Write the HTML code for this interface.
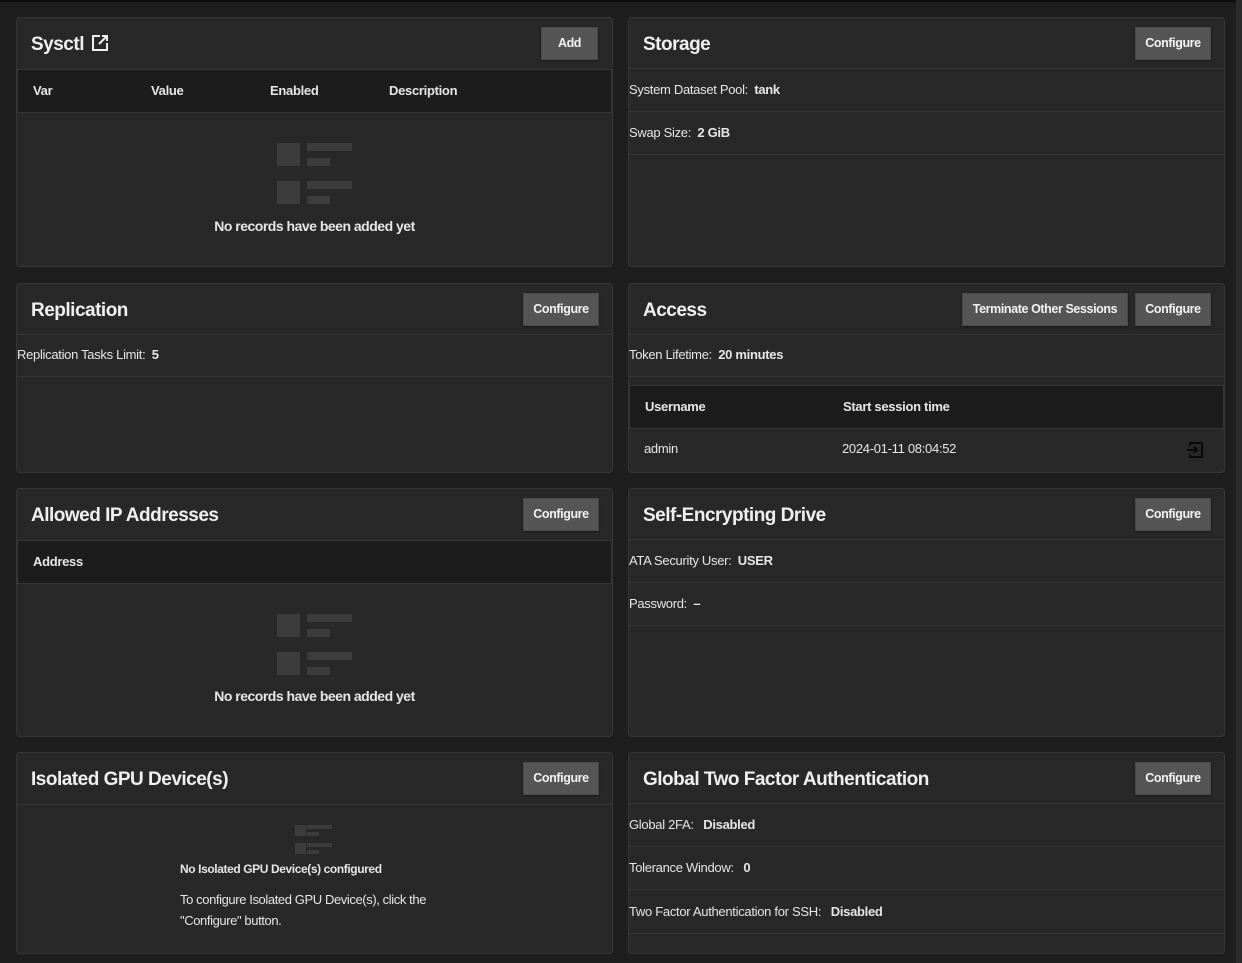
<!DOCTYPE html>
<html><head><meta charset="utf-8"><style>
*{box-sizing:border-box;margin:0;padding:0}
body{width:1242px;height:963px;background:#1e1e1e;font-family:"Liberation Sans",sans-serif;color:#e6e6e6;position:relative;overflow:hidden;font-size:13px;letter-spacing:-0.3px}
.top{position:absolute;left:0;top:0;width:1242px;height:2px;background:#0e0e0e}
.sb{position:absolute;left:1236px;top:0;width:6px;height:963px;background:#2a2a2a}
.card{position:absolute;background:#282828;border:1px solid #363636;border-radius:4px;overflow:hidden}
.L{left:16px;width:597px}.R{left:628px;width:597px}
.hd{position:absolute;left:0;right:0;top:0;height:51px;border-bottom:1px solid #363636}
.ttl{position:absolute;left:14px;top:16px;font-size:19px;font-weight:bold;color:#f0f0f0;letter-spacing:-0.5px}
.btn{position:absolute;top:9px;height:33px;background:#555;border:1px solid #4a4a4a;color:#f2f2f2;font-weight:bold;font-size:12.5px;letter-spacing:-0.4px;line-height:31px;text-align:center;box-shadow:0 1px 2px rgba(0,0,0,.4)}
.row{position:absolute;left:0;right:0;height:43px;border-bottom:1px solid #363636;line-height:42px;padding-left:0}
.row b{margin-left:3px}
.th{position:absolute;left:0;right:0;height:44px;background:#1c1c1c;border:1px solid #363636;font-weight:bold;line-height:42px}
.th span,.tr span{position:absolute}
.tr{position:absolute;left:0;right:0;height:43px;line-height:40px}
.ei{position:absolute}
.ei div{position:absolute;background:#3c3c3c}
.empty{position:absolute;left:0;right:0;text-align:center;font-weight:bold;font-size:14px;letter-spacing:-0.5px}
</style></head><body>
<div class="top"></div><div class="sb"></div>

<!-- Sysctl -->
<div class="card L" style="top:17px;height:250px">
 <div class="hd" style="border:none"><div class="ttl">Sysctl <svg width="18" height="18" viewBox="0 0 18 18" style="vertical-align:-2px;margin-left:2px"><path d="M9 2H2v14h14V9" fill="none" stroke="#eee" stroke-width="2"/><path d="M8 10L16 2M11 2h5v5" fill="none" stroke="#eee" stroke-width="2"/></svg></div>
 <div class="btn" style="left:524px;width:57px">Add</div></div>
 <div class="th" style="top:51px"><span style="left:15px">Var</span><span style="left:133px">Value</span><span style="left:252px">Enabled</span><span style="left:371px">Description</span></div>
 <div class="ei" style="left:260px;top:125px"><div style="left:0;top:0;width:23px;height:23px"></div><div style="left:30px;top:0;width:45px;height:8px"></div><div style="left:30px;top:15px;width:23px;height:8px"></div><div style="left:0;top:38px;width:23px;height:23px"></div><div style="left:30px;top:38px;width:45px;height:8px"></div><div style="left:30px;top:53px;width:23px;height:8px"></div></div>
 <div class="empty" style="top:200px">No records have been added yet</div>
</div>

<!-- Storage -->
<div class="card R" style="top:17px;height:250px">
 <div class="hd"><div class="ttl">Storage</div><div class="btn" style="left:506px;width:76px">Configure</div></div>
 <div class="row" style="top:51px">System Dataset Pool: <b>tank</b></div>
 <div class="row" style="top:94px">Swap Size: <b>2 GiB</b></div>
</div>

<!-- Replication -->
<div class="card L" style="top:283px;height:190px">
 <div class="hd"><div class="ttl">Replication</div><div class="btn" style="left:506px;width:76px">Configure</div></div>
 <div class="row" style="top:50px">Replication Tasks Limit: <b>5</b></div>
</div>

<!-- Access -->
<div class="card R" style="top:283px;height:190px">
 <div class="hd"><div class="ttl">Access</div><div class="btn" style="left:333px;width:166px">Terminate Other Sessions</div><div class="btn" style="left:506px;width:76px">Configure</div></div>
 <div class="row" style="top:50px">Token Lifetime: <b>20 minutes</b></div>
 <div class="th" style="top:101px"><span style="left:15px">Username</span><span style="left:213px">Start session time</span></div>
 <div class="tr" style="top:145px"><span style="left:15px">admin</span><span style="left:213px">2024-01-11 08:04:52</span>
 <svg style="position:absolute;left:557px;top:12px" width="18" height="18" viewBox="0 0 18 18"><path d="M4 5V2h12v14H4v-3" fill="none" stroke="#0a0a0a" stroke-width="2"/><path d="M1 9h10M8 6l3 3-3 3" fill="none" stroke="#0a0a0a" stroke-width="2"/></svg></div>
</div>

<!-- Allowed IP -->
<div class="card L" style="top:488px;height:249px">
 <div class="hd" style="border:none"><div class="ttl">Allowed IP Addresses</div><div class="btn" style="left:506px;width:76px">Configure</div></div>
 <div class="th" style="top:51px"><span style="left:15px">Address</span></div>
 <div class="ei" style="left:260px;top:125px"><div style="left:0;top:0;width:23px;height:23px"></div><div style="left:30px;top:0;width:45px;height:8px"></div><div style="left:30px;top:15px;width:23px;height:8px"></div><div style="left:0;top:38px;width:23px;height:23px"></div><div style="left:30px;top:38px;width:45px;height:8px"></div><div style="left:30px;top:53px;width:23px;height:8px"></div></div>
 <div class="empty" style="top:199px">No records have been added yet</div>
</div>

<!-- SED -->
<div class="card R" style="top:488px;height:249px">
 <div class="hd"><div class="ttl">Self-Encrypting Drive</div><div class="btn" style="left:506px;width:76px">Configure</div></div>
 <div class="row" style="top:51px">ATA Security User: <b>USER</b></div>
 <div class="row" style="top:94px">Password: <b>–</b></div>
</div>

<!-- GPU -->
<div class="card L" style="top:752px;height:202px">
 <div class="hd" style="height:52px"><div class="ttl">Isolated GPU Device(s)</div><div class="btn" style="left:506px;width:76px">Configure</div></div>
 <div class="ei" style="left:278px;top:72px"><div style="left:0;top:0;width:11px;height:11px"></div><div style="left:12px;top:0;width:25px;height:4px"></div><div style="left:12px;top:7px;width:12px;height:4px"></div><div style="left:0;top:18px;width:11px;height:11px"></div><div style="left:12px;top:18px;width:25px;height:4px"></div><div style="left:12px;top:25px;width:12px;height:4px"></div></div>
 <div style="position:absolute;left:163px;top:109px;font-weight:bold;font-size:12px;letter-spacing:-0.4px">No Isolated GPU Device(s) configured</div>
 <div style="position:absolute;left:163px;top:136px;font-size:13px;line-height:21px;letter-spacing:-0.4px">To configure Isolated GPU Device(s), click the<br>"Configure" button.</div>
</div>

<!-- 2FA -->
<div class="card R" style="top:752px;height:202px">
 <div class="hd"><div class="ttl">Global Two Factor Authentication</div><div class="btn" style="left:506px;width:76px">Configure</div></div>
 <div class="row" style="top:51px">Global 2FA: &nbsp;<b>Disabled</b></div>
 <div class="row" style="top:94px">Tolerance Window: &nbsp;<b>0</b></div>
 <div class="row" style="top:138px">Two Factor Authentication for SSH: &nbsp;<b>Disabled</b></div>
</div>
</body></html>
